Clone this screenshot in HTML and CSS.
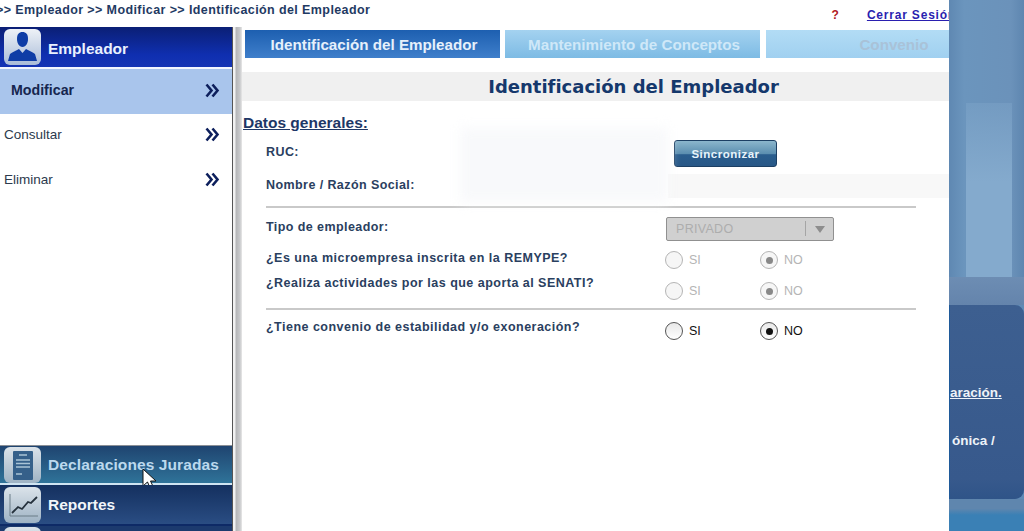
FILE: index.html
```html
<!DOCTYPE html>
<html lang="es">
<head>
<meta charset="utf-8">
<title>Identificación del Empleador</title>
<link rel="stylesheet" href="styles.css">
</head>
<body>
<div class="page">
  <div class="app">
    <header class="topbar">
      <div class="crumbs">&gt;&gt; Empleador &gt;&gt; Modificar &gt;&gt; Identificación del Empleador</div>
      <div class="top-links"><span class="help">?</span><a class="logout" href="#">Cerrar Sesión</a></div>
    </header>
    <div class="columns">
      <nav class="sidebar">
        <div class="menu-head">
          <span class="tile"><svg viewBox="0 0 37 36" width="37" height="36"><path d="M13 10C13 5 15 3 18.500 3C22 3 24 5 24 10C24 14 22 18 18.500 18C15 18 13 14 13 10Z" fill="#0f3da6"/><path d="M4 32L6 25C8 23 12 22 15 20L18.500 24L22 20C25 22 29 23 31 25L33 32Z" fill="#0f3da6"/></svg></span>
          <span class="menu-label">Empleador</span>
        </div>
        <ul class="menu-list">
          <li class="menu-item active"><span>Modificar</span><svg class="chev" viewBox="0 0 15 15" width="15" height="15"><path d="M1.500 1.500L6.500 7.500L1.500 13.500M7.500 1.500L12.500 7.500L7.500 13.500" fill="none" stroke="#0d1f5c" stroke-width="2.600"/></svg></li>
          <li class="menu-item"><span>Consultar</span><svg class="chev" viewBox="0 0 15 15" width="15" height="15"><path d="M1.500 1.500L6.500 7.500L1.500 13.500M7.500 1.500L12.500 7.500L7.500 13.500" fill="none" stroke="#0d1f5c" stroke-width="2.600"/></svg></li>
          <li class="menu-item"><span>Eliminar</span><svg class="chev" viewBox="0 0 15 15" width="15" height="15"><path d="M1.500 1.500L6.500 7.500L1.500 13.500M7.500 1.500L12.500 7.500L7.500 13.500" fill="none" stroke="#0d1f5c" stroke-width="2.600"/></svg></li>
        </ul>
        <div class="menu-foot">
          <div class="foot-item hover">
            <span class="tile small"><svg viewBox="0 0 37 36" width="37" height="36"><rect x="9" y="4" width="20" height="29" rx="1" fill="#35608a"/><path d="M15 8H23M12 13H26M12 16.500H26M12 20H26M12 27H18" stroke="#a9c3d6" stroke-width="1.500"/></svg></span>
            <span>Declaraciones Juradas</span>
            <svg class="cursor" viewBox="0 0 18 24" width="18" height="24"><path d="M1 1V18L5.500 14L9 22L12 20.500L8.500 13H14Z" fill="#fff" stroke="#111" stroke-width="1"/></svg>
          </div>
          <div class="foot-item">
            <span class="tile small"><svg viewBox="0 0 37 36" width="37" height="36"><path d="M6 7V29H34" fill="none" stroke="#6b7c88" stroke-width="1"/><path d="M8 26L14 20L18 22L24 15L27 16L33 10" fill="none" stroke="#26323d" stroke-width="1.800"/></svg></span>
            <span>Reportes</span>
          </div>
          <div class="foot-item stub"><span class="tile small"></span></div>
        </div>
      </nav>
      <div class="gutter"></div>
      <main class="content">
        <div class="tabs">
          <div class="tab current">Identificación del Empleador</div>
          <div class="tab">Mantenimiento de Conceptos</div>
          <div class="tab off">Convenio</div>
        </div>
        <h1 class="title">Identificación del Empleador</h1>
        <h2 class="section">Datos generales:</h2>
        <div class="form">
          <div class="row row-ruc">
            <span class="label">RUC:</span>
            <button class="sync" type="button">Sincronizar</button>
          </div>
          <div class="row row-name"><span class="label">Nombre / Razón Social:</span></div>
          <hr class="rule">
          <div class="row row-type">
            <span class="label">Tipo de empleador:</span>
            <div class="select"><span>PRIVADO</span><span class="select-arrow"></span></div>
          </div>
          <div class="row row-q1">
            <span class="label question">¿Es una microempresa inscrita en la REMYPE?</span>
            <div class="radios muted"><span class="opt"><i class="radio"></i>SI</span><span class="opt"><i class="radio on"></i>NO</span></div>
          </div>
          <div class="row row-q2">
            <span class="label question">¿Realiza actividades por las que aporta al SENATI?</span>
            <div class="radios muted"><span class="opt"><i class="radio"></i>SI</span><span class="opt"><i class="radio on"></i>NO</span></div>
          </div>
          <hr class="rule">
          <div class="row row-q3">
            <span class="label question">¿Tiene convenio de estabilidad y/o exoneración?</span>
            <div class="radios"><span class="opt"><i class="radio"></i>SI</span><span class="opt"><i class="radio on"></i>NO</span></div>
          </div>
          <div class="blur"></div>
        </div>
      </main>
    </div>
  </div>
  <aside class="backdrop">
    <div class="backdrop-top"></div>
    <div class="card">
      <a class="card-link" href="#">aración.</a>
      <p class="card-text">ónica /</p>
    </div>
    <div class="backdrop-bottom"></div>
  </aside>
</div>
</body>
</html>
```
FILE: styles.css
```css
* { box-sizing: border-box; }
html, body { margin: 0; height: 100%; overflow: hidden; }
body { font-family: "Liberation Sans", Arial, sans-serif; background: #fff; }
.page { display: flex; width: 1024px; height: 531px; }
.app { width: 949px; height: 531px; background: #fff; overflow: hidden; display: flex; flex-direction: column; }

.topbar { height: 27px; flex: none; display: flex; justify-content: space-between; align-items: flex-start; }
.crumbs { font-size: 12.500px; font-weight: bold; color: #1f3a63; margin-left: -4px; padding-top: 3px; letter-spacing: .4px; white-space: nowrap; }
.top-links { display: flex; align-items: flex-start; padding-top: 8px; margin-right: -7px; white-space: nowrap; }
.help { color: #b01822; font-size: 12px; font-weight: bold; margin-right: 28px; }
.logout { color: #2a1fb0; font-size: 12px; font-weight: bold; letter-spacing: .8px; }

.columns { flex: 1; display: flex; min-height: 0; }
.sidebar { width: 233px; flex: none; display: flex; flex-direction: column; border-right: 1px solid #555; }
.gutter { width: 9px; flex: none; background: linear-gradient(90deg, #f1f1f1 0, #f1f1f1 2px, #b4b5b7 3px, #c9cacc 7px, #e8e8e8 9px); }
.tile { width: 37px; height: 36px; border-radius: 6px; flex: none; background: linear-gradient(#eef2f7, #a9bcd8); overflow: hidden; display: block; }
.tile.small { background: linear-gradient(#dbe3ea, #9fb3c4); }

.menu-head { height: 42px; flex: none; display: flex; align-items: center; gap: 7px; padding-left: 4px; background: linear-gradient(#0b1f75, #0f2fb0 70%, #1434b4); border-bottom: 2px solid #f2f6ff; box-shadow: 0 1px 0 #8a8f96; color: #e9f1ff; font-size: 15.500px; font-weight: bold; }
.menu-label { padding-top: 3px; }
.menu-list { list-style: none; margin: 0; padding: 0; flex: 1; }
.menu-item { height: 44.500px; display: flex; align-items: center; justify-content: space-between; padding: 0 12px 2px 4px; font-size: 13.500px; color: #2c3a4d; }
.menu-item.active { background: #a9c5ec; color: #16264f; font-size: 14.200px; font-weight: bold; padding-left: 11px; }
.chev { flex: none; }
.menu-foot { flex: none; }
.foot-item { position: relative; height: 41px; display: flex; align-items: center; gap: 7px; padding-left: 4px; font-size: 15.500px; font-weight: bold; color: #f2f6fb; background: linear-gradient(#14305f, #2a4d83); border-bottom: 2px solid #0e2a66; }
.foot-item.hover { height: 40px; color: #bcd9ee; letter-spacing: .1px; background: linear-gradient(#1f4470, #2f7399); border-top: 1px solid #8a8f96; border-bottom: 2px solid #cfe4f2; }
.foot-item.stub { height: 5px; background: #1c3a6e; border: 0; padding-top: 1px; align-items: flex-start; overflow: hidden; }
.cursor { position: absolute; left: 142px; top: 22px; }

.content { position: relative; flex: 1; min-width: 0; }
.tabs { display: flex; gap: 5px; padding: 3px 0 0 3px; height: 31px; }
.tab { height: 28px; width: 255px; flex: none; padding-left: 3px; display: flex; align-items: center; justify-content: center; font-size: 15.200px; font-weight: bold; color: #cfe8f8; background: linear-gradient(#a4d2f0, #7dbbe4); }
.tab.current { color: #e6f0fb; background: linear-gradient(#1d5fb0, #3f7fcb); }
.tab.off { width: 256px; margin-left: 1px; padding-left: 0; color: #a9c2d8; background: linear-gradient(#b2dcf5, #a0d0f0); }
.title { margin: 14px 0 0; height: 29px; padding-left: 76px; background: #f0f0f0; text-align: center; font-family: "DejaVu Sans", sans-serif; font-size: 18px; font-weight: bold; line-height: 29px; color: #15386c; }
.section { margin: 13px 0 0 1px; font-size: 15.500px; font-weight: bold; line-height: 17px; color: #1d3766; text-decoration: underline; }

.form { position: relative; padding: 0 33px 0 24px; }
.row { display: flex; align-items: flex-start; }
.label { font-size: 12.500px; font-weight: bold; color: #2a4060; letter-spacing: .42px; white-space: nowrap; }
.question { letter-spacing: .48px; }
.row-ruc { height: 41px; position: relative; padding-top: 14px; }
.row-name { height: 34px; position: relative; padding-top: 6px; }
.row-name::after { content: ""; position: absolute; left: 402px; right: -33px; top: 2px; height: 24px; background: #f8f8f8; }
.rule { border: 0; height: 2px; background: #c9c9c9; margin: 0; }
.row-type { height: 37px; padding-top: 12px; position: relative; }
.row-q1 { height: 29px; position: relative; padding-top: 6px; }
.row-q2 { height: 34px; position: relative; padding-top: 2px; }
.row-q3 { height: 40px; position: relative; padding-top: 10px; }

.sync { position: absolute; left: 408px; top: 9px; width: 103px; height: 27px; border: 1px solid #1c3f63; border-radius: 3px; background: linear-gradient(#8bb6cc, #5c8fb0 50%, #2a5d8d 55%, #285887); color: #e8f4fb; font: bold 11.500px "Liberation Sans", Arial, sans-serif; letter-spacing: .5px; padding: 0; }
.select { position: absolute; left: 400px; top: 9px; width: 168px; height: 24px; display: flex; align-items: center; padding-left: 9px; border: 1px solid #909090; border-radius: 2px; background: #d0d0d0; color: #adadad; font-size: 12.500px; letter-spacing: .3px; }
.select-arrow { position: absolute; right: 8px; top: 8px; width: 0; height: 0; border: 5px solid transparent; border-top: 7px solid #8d8d8d; border-bottom: 0; }
.select::after { content: ""; position: absolute; right: 27px; top: 3px; height: 15px; width: 1px; background: #a5a5a5; }
.radios { position: absolute; left: 399px; display: flex; }
.row-q1 .radios { top: 6px; }
.row-q2 .radios { top: 8px; }
.row-q3 .radios { top: 12px; }
.opt { width: 95px; display: flex; align-items: center; gap: 6px; font-size: 12.500px; color: #111; }
.radio { width: 18px; height: 18px; border-radius: 50%; border: 1.500px solid #555; background: linear-gradient(#e8e8e8, #fff); display: flex; align-items: center; justify-content: center; flex: none; }
.radio.on::after { content: ""; width: 7px; height: 7px; border-radius: 50%; background: #111; }
.muted .opt { color: #b5b5b5; }
.muted .radio { border-color: #b5b5b5; background: #f6f6f6; }
.muted .radio.on::after { background: #888; }
.blur { position: absolute; left: 218px; top: -3px; width: 208px; height: 74px; background: #f8f9fb; filter: blur(6px); }

.backdrop { flex: 1; display: flex; flex-direction: column; overflow: hidden; background: #5f8ab5; }
.backdrop-top { height: 305px; flex: none; background: linear-gradient(#6d8db3, #6484ac) 0 277px / 100% 28px no-repeat, linear-gradient(rgba(132, 170, 205, .35), #84aacd 45%) 17px 103px / 46px 175px no-repeat, linear-gradient(90deg, #5f88b2 0, #6b95bd 15px, #6b92ba 62px, #5e86b0 100%); }
.card { height: 194px; flex: none; padding: 80px 0 0 0; border-radius: 0 9px 9px 0; border-left: 1px solid #1f5a9a; background: linear-gradient(#3d5f90, #37598c 90%, #2f5488); color: #eef3f8; font-size: 13.500px; font-weight: bold; }
.card-link { display: block; color: #eef3f8; height: 48px; white-space: nowrap; text-decoration: underline; }
.card-text { margin: 0 0 0 2px; }
.backdrop-bottom { flex: 1; background: linear-gradient(#5f86ae 0, #5f86ae 30%, #3a80b5 50%, #3a80b5 100%); }
```
